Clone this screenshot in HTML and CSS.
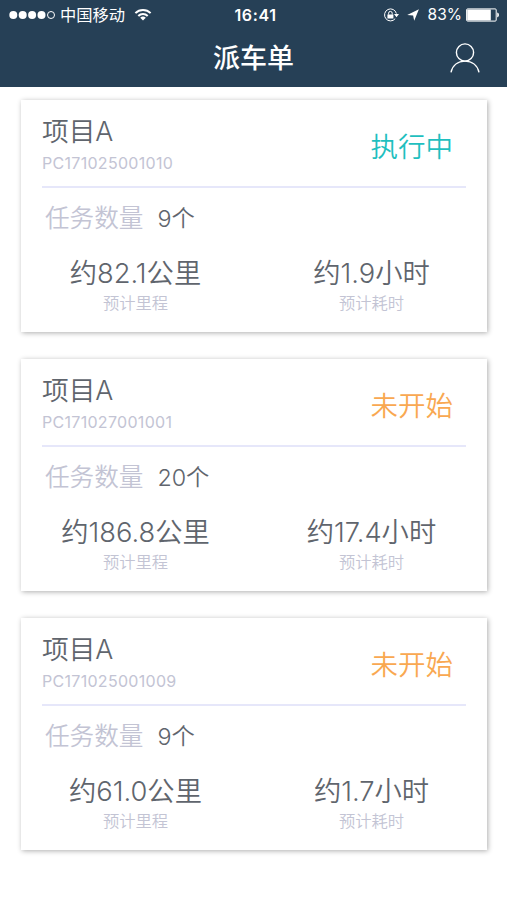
FILE: index.html
```html
<!DOCTYPE html>
<html lang="zh-CN">
<head>
    <meta charset="UTF-8">
    <meta name="viewport" content="width=device-width, initial-scale=1.0">
    <title>派车单</title>
    <link rel="stylesheet" href="styles.css">
</head>
<body>
    <header>
        <div class="status-bar">
            <div class="status-left">
                <svg class="signal" width="47" height="10" viewBox="0 0 47 10">
                    <circle cx="4.3" cy="5" r="4"/>
                    <circle cx="13.7" cy="5" r="4"/>
                    <circle cx="23.1" cy="5" r="4"/>
                    <circle cx="32.5" cy="5" r="4"/>
                    <circle class="empty" cx="42" cy="5" r="3.5"/>
                </svg>
                <span class="carrier">中国移动</span>
                <svg class="wifi" width="18" height="13" viewBox="0 0 18 13">
                    <path class="arc" d="M1.4 5.1a10.7 10.7 0 0 1 15.2 0M4.3 8a6.6 6.6 0 0 1 9.4 0"/>
                    <path d="M9 12.6 6.2 9.8a4 4 0 0 1 5.6 0z"/>
                </svg>
            </div>
            <span class="time">16:41</span>
            <div class="status-right">
                <svg class="lock" width="17" height="14" viewBox="0 0 17 14">
                    <path class="line" d="M12.2 10.7A6 6 0 1 1 13.4 5.6"/>
                    <path d="M11 6h5l-2.5 3.3zM4.4 6.4h6v4h-6z"/>
                    <path class="line" d="M5.6 6.6V5.2a1.8 1.8 0 0 1 3.6 0v1.4"/>
                </svg>
                <svg class="arrow" width="12" height="12" viewBox="0 0 12 12">
                    <path d="M11.9.3 7.2 11.8 6.1 6.6.2 5.9z"/>
                </svg>
                <span class="percent">83%</span>
                <svg class="battery" width="34" height="14" viewBox="0 0 34 14">
                    <rect class="line" x=".6" y=".9" width="29.6" height="12.2" rx="1"/>
                    <path d="M1.2 1.5h23.6v11H1.2zM31.2 4.6q1.8.4 1.8 2.4t-1.8 2.4z"/>
                </svg>
            </div>
        </div>
        <div class="title-bar">
            <h1>派车单</h1>
            <svg class="user" width="30" height="30" viewBox="0 0 30 30">
                <circle cx="15" cy="9.5" r="8.6"/>
                <path d="M1 29.3C2.6 22 8.2 18.1 15 18.1S27.4 22 29 29.3"/>
            </svg>
        </div>
    </header>

    <main>
        <section class="card">
            <div class="card-head">
                <div>
                    <h2>项目A</h2>
                    <p class="code">PC171025001010</p>
                </div>
                <span class="state running">执行中</span>
            </div>
            <p class="tasks"><span>任务数量</span>9个</p>
            <div class="stats">
                <div><strong>约82.1公里</strong><small>预计里程</small></div>
                <div><strong>约1.9小时</strong><small>预计耗时</small></div>
            </div>
        </section>

        <section class="card">
            <div class="card-head">
                <div>
                    <h2>项目A</h2>
                    <p class="code">PC171027001001</p>
                </div>
                <span class="state">未开始</span>
            </div>
            <p class="tasks"><span>任务数量</span>20个</p>
            <div class="stats">
                <div><strong>约186.8公里</strong><small>预计里程</small></div>
                <div><strong>约17.4小时</strong><small>预计耗时</small></div>
            </div>
        </section>

        <section class="card">
            <div class="card-head">
                <div>
                    <h2>项目A</h2>
                    <p class="code">PC171025001009</p>
                </div>
                <span class="state">未开始</span>
            </div>
            <p class="tasks"><span>任务数量</span>9个</p>
            <div class="stats">
                <div><strong>约61.0公里</strong><small>预计里程</small></div>
                <div><strong>约1.7小时</strong><small>预计耗时</small></div>
            </div>
        </section>
    </main>
</body>
</html>
```
FILE: styles.css
```css
:root {
    --navy: #264056;
    --text: #60656d;
    --muted: #c3c4d4;
    --line: #e6e7fa;
    --teal: #1fbfbf;
    --orange: #f9a851;
}

* {
    margin: 0;
    padding: 0;
    box-sizing: border-box;
}

body {
    min-height: 100vh;
    font-family: Inter, 'Noto Sans CJK SC', sans-serif;
    font-weight: 350;
    color: var(--text);
    background-color: #fff;
}

header {
    height: 87px;
    background-color: var(--navy);
    color: #fff;
}

.status-bar {
    display: grid;
    grid-template-columns: 1fr auto 1fr;
    align-items: center;
    height: 30px;
    padding: 0 7px 0 9px;
    font-size: 16px;
    font-weight: 400;
    line-height: 30px;
}

.status-left,
.status-right {
    display: flex;
    align-items: center;
}

.status-right {
    justify-content: flex-end;
}

.status-bar svg {
    fill: #fff;
}

.status-bar .empty,
.status-bar .line,
.status-bar .arc {
    fill: none;
    stroke: #fff;
    stroke-width: 1;
}

.status-bar .arc {
    stroke-width: 2;
}

.carrier {
    margin: 0 9px 0 4px;
    font-size: 16.3px;
}

.wifi {
    margin-top: -2px;
}

.time {
    padding-left: 2px;
    font-weight: 600;
    letter-spacing: 0.6px;
}

.arrow {
    margin: 0 9px 0 7px;
}

.percent {
    margin-right: 4px;
    font-size: 15.5px;
}

.title-bar {
    display: grid;
    grid-template-columns: 1fr auto 1fr;
    align-items: center;
    height: 56px;
    padding: 0 27px;
}

.title-bar h1 {
    grid-column: 2;
    padding-top: 2px;
    font-size: 27px;
    font-weight: 500;
    line-height: 54px;
}

.user {
    justify-self: end;
    fill: none;
    stroke: #fff;
    stroke-width: 1.4;
}

main {
    display: flex;
    flex-direction: column;
    gap: 27px;
    padding: 13px 20px 50px 21px;
}

.card {
    height: 232px;
    background-color: #fff;
    box-shadow: 1px 1px 5px rgba(0, 0, 0, 0.32);
}

.card-head {
    display: flex;
    justify-content: space-between;
    height: 88px;
    margin: 0 21px;
    padding: 14px 13px 0 0;
    border-bottom: 2px solid var(--line);
}

.card-head h2 {
    font-size: 26.7px;
    font-weight: 350;
    line-height: 34px;
}

.code {
    margin-top: 5px;
    color: var(--muted);
    font-size: 16px;
    font-weight: 400;
    letter-spacing: 0.3px;
    line-height: 20px;
}

.state {
    color: var(--orange);
    font-size: 27.5px;
    line-height: 66px;
}

.state.running {
    color: var(--teal);
}

.tasks {
    margin: 14px 0 0 24px;
    font-size: 23.3px;
    line-height: 32px;
}

.tasks span {
    margin-right: 14px;
    color: var(--muted);
    font-size: 24.6px;
}

.stats {
    display: grid;
    grid-template-columns: 229px 1fr;
    gap: 6px;
    margin-top: 21px;
    text-align: center;
}

.stats strong,
.stats small {
    display: block;
    white-space: nowrap;
}

.stats strong {
    font-size: 27.3px;
    font-weight: 350;
    line-height: 36px;
}

.stats small {
    color: var(--muted);
    font-size: 16.3px;
    line-height: 23px;
}
```
